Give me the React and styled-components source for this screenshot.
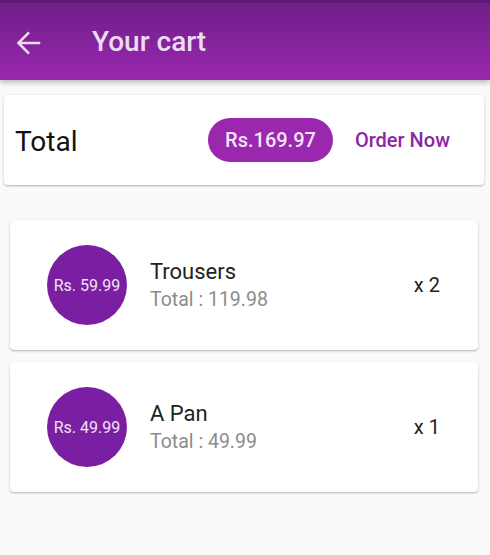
import React from 'react';
import styled, { createGlobalStyle } from 'styled-components';

const GlobalStyle = createGlobalStyle`
    html, body {
        margin: 0;
        padding: 0;
        background: #fafafa;
        font-family: Roboto, "Liberation Sans", sans-serif;
    }
`;

const Page = styled.div`
    width: 490px;
    min-height: 555px;
    background: #fafafa;
`;

const AppBar = styled.header`
    height: 80px;
    box-sizing: border-box;
    border-top: 3px solid #5e1a79;
    background: linear-gradient(to bottom, #6e1f88, #9a27af);
    box-shadow: 0 2px 6px rgba(0, 0, 0, 0.3);
    display: flex;
    align-items: center;
    padding: 0 0 0 14px;
    color: #ecdcef;
`;

const BackIcon = styled.svg`
    width: 30px;
    height: 30px;
    fill: none;
    stroke: #ecdcef;
    stroke-width: 2;
    margin-top: 2px;
`;

const Title = styled.h1`
    margin: 0 0 0 48px;
    font-size: 28px;
    font-weight: 500;
`;

const Content = styled.main`
    padding: 15px 6px 0 4px;
`;

const Card = styled.div`
    background: #ffffff;
    border-radius: 4px;
    box-shadow: 0 1px 3px rgba(0, 0, 0, 0.2), 0 1px 1px rgba(0, 0, 0, 0.1);
`;

const TotalCard = styled(Card)`
    height: 90px;
    display: flex;
    align-items: center;
    padding: 0 34px 0 11px;
`;

const TotalLabel = styled.span`
    font-size: 28px;
    color: #111;
    flex: 1;
    margin-top: 3px;
`;

const Chip = styled.span`
    background: #9a27ae;
    color: #f2e6f4;
    font-size: 20px;
    font-weight: 500;
    height: 44px;
    padding: 0 17px;
    border-radius: 22px;
    display: flex;
    align-items: center;
    margin-right: 22px;
`;

const OrderButton = styled.button`
    border: none;
    background: none;
    color: #8e24aa;
    font-family: inherit;
    font-size: 20px;
    font-weight: 500;
    padding: 0;
    cursor: pointer;
`;

const List = styled.div`
    display: flex;
    flex-direction: column;
    gap: 12px;
    margin: 35px 6px 0 6px;
`;

const ItemCard = styled(Card)`
    height: 130px;
    display: flex;
    align-items: center;
    padding: 0 22px 0 37px;
`;

const PriceCircle = styled.div`
    width: 80px;
    height: 80px;
    border-radius: 50%;
    background: #7b1fa2;
    color: #f0e4f3;
    font-size: 16px;
    display: flex;
    align-items: center;
    justify-content: center;
    flex-shrink: 0;
`;

const Info = styled.div`
    flex: 1;
    margin-left: 23px;
    display: flex;
    flex-direction: column;
    gap: 4px;
`;

const Name = styled.span`
    font-size: 22px;
    color: #222;
`;

const SubTotal = styled.span`
    font-size: 19.5px;
    color: #8c8c8c;
`;

const Qty = styled.span`
    font-size: 20px;
    color: #222;
    margin-right: 16px;
`;

const items = [
    { name: 'Trousers', price: 59.99, qty: 2 },
    { name: 'A Pan', price: 49.99, qty: 1 },
];

export default function App() {
    const total = items.reduce((s, i) => s + i.price * i.qty, 0);
    return (
        <Page>
            <GlobalStyle />
            <AppBar>
                <BackIcon viewBox="0 0 24 24">
                    <path d="M21 12H3.5M12 3.5L3.5 12l8.5 8.5" />
                </BackIcon>
                <Title>Your cart</Title>
            </AppBar>
            <Content>
                <TotalCard>
                    <TotalLabel>Total</TotalLabel>
                    <Chip>Rs.{total.toFixed(2)}</Chip>
                    <OrderButton>Order Now</OrderButton>
                </TotalCard>
                <List>
                    {items.map(item => (
                        <ItemCard key={item.name}>
                            <PriceCircle>Rs. {item.price.toFixed(2)}</PriceCircle>
                            <Info>
                                <Name>{item.name}</Name>
                                <SubTotal>Total : {(item.price * item.qty).toFixed(2)}</SubTotal>
                            </Info>
                            <Qty>x {item.qty}</Qty>
                        </ItemCard>
                    ))}
                </List>
            </Content>
        </Page>
    );
}
